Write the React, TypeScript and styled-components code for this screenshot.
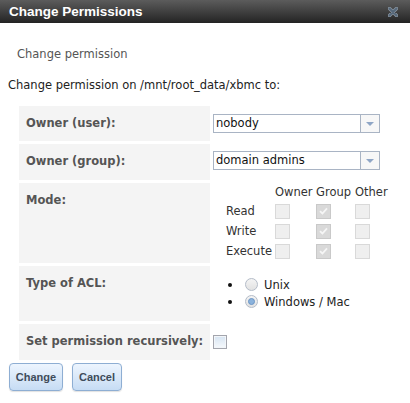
import { Fragment } from "react";
import styled, { createGlobalStyle } from "styled-components";

const GlobalStyle = createGlobalStyle`
  html, body {
    margin: 0;
    padding: 0;
    background: #fff;
  }
  body {
    font-family: "DejaVu Sans", Verdana, sans-serif;
    font-size: 11.5px;
    color: #222;
  }
`;

const Dialog = styled.div`
  width: 410px;
  height: 403px;
  background: #fff;
  overflow: hidden;
`;

const TitleBar = styled.div`
  height: 23px;
  display: flex;
  align-items: center;
  justify-content: space-between;
  padding: 0 12px 0 9px;
  background: linear-gradient(#5c5c5c, #2c2c2c 85%, #222);
`;

const Title = styled.span`
  font-family: "Liberation Sans", Arial, sans-serif;
  font-weight: bold;
  font-size: 13.5px;
  line-height: 23px;
  color: #fff;
`;

const Content = styled.div`
  padding: 0 8px;
`;

const Subtitle = styled.div`
  margin: 24px 0 0 9px;
  line-height: 14px;
  color: #555;
`;

const Intro = styled.div`
  margin-top: 17px;
  line-height: 14px;
  color: #222;
`;

const FormGrid = styled.div`
  display: grid;
  grid-template-columns: 191px 1fr;
  column-gap: 3px;
  row-gap: 3px;
  margin: 14px 0 0 11px;
`;

const LabelCell = styled.div<{ $h: number }>`
  height: ${({ $h }) => $h}px;
  box-sizing: border-box;
  padding: 10px 7px 0;
  background: #f4f4f4;
  font-weight: bold;
  color: #555;
  line-height: 14px;
  white-space: nowrap;
`;

const FieldCell = styled.div<{ $top: number }>`
  padding-top: ${({ $top }) => $top}px;
`;

const Select = styled.div`
  width: 167px;
  height: 19px;
  box-sizing: border-box;
  border: 1px solid #a9b4c4;
  background: #fff;
  display: flex;
`;

const SelectValue = styled.span`
  flex: 1;
  padding-left: 2px;
  line-height: 17px;
  color: #111;
`;

const SelectArrow = styled.span`
  width: 18px;
  border-left: 1px solid #a9b4c4;
  background: #f7f7f7;
  display: flex;
  align-items: center;
  justify-content: center;
  &::after {
    content: "";
    border-left: 4px solid transparent;
    border-right: 4px solid transparent;
    border-top: 4px solid #8fa6c6;
  }
`;

const ModeGrid = styled.div`
  display: grid;
  grid-template-columns: 49px 41px 39px auto;
  grid-template-rows: 18px repeat(3, 20px);
  align-items: center;
  padding-left: 13px;
  line-height: 14px;
  color: #333;
`;

const Box = styled.span<{ $checked?: boolean }>`
  width: 15px;
  height: 15px;
  box-sizing: border-box;
  display: flex;
  align-items: center;
  justify-content: center;
  border: 1px solid ${({ $checked }) => ($checked ? "#c9c9c9" : "#d9d9d9")};
  background: ${({ $checked }) => ($checked ? "#d9d9d9" : "#efefef")};
`;

const RadioList = styled.ul`
  list-style: none;
  margin: 0;
  padding: 0;
`;

const RadioItem = styled.li`
  display: flex;
  align-items: center;
  height: 17px;
  color: #222;
  &::before {
    content: "";
    width: 4px;
    height: 4px;
    border-radius: 50%;
    background: #111;
    margin: 0 13px 0 15px;
  }
`;

const Radio = styled.span<{ $checked?: boolean }>`
  width: 13px;
  height: 13px;
  box-sizing: border-box;
  border-radius: 50%;
  border: 1px solid #b4bcc8;
  background: linear-gradient(#f4f4f4, #e2e2e2);
  margin-right: 6px;
  display: flex;
  align-items: center;
  justify-content: center;
  &::after {
    content: "";
    display: ${({ $checked }) => ($checked ? "block" : "none")};
    width: 7px;
    height: 7px;
    box-sizing: border-box;
    border-radius: 50%;
    border: 1px solid #6c95c4;
    background: #8ab2dc;
  }
`;

const RecursiveBox = styled.span`
  display: block;
  width: 14px;
  height: 14px;
  box-sizing: border-box;
  border: 1px solid #a3a5ad;
  box-shadow: inset 0 0 0 1px #f2f5f9;
  background: linear-gradient(#d6e4f2, #f6f9fc);
`;

const ButtonRow = styled.div`
  display: flex;
  gap: 9px;
  margin: 3px 0 0 1px;
`;

const Button = styled.button<{ $w: number }>`
  width: ${({ $w }) => $w}px;
  height: 28px;
  padding: 0;
  border: 1px solid #8eaed3;
  border-radius: 4px;
  background: linear-gradient(#edf5fe, #c6dcf4);
  box-shadow: 0 1px 1px rgba(0, 0, 0, 0.12);
  font-family: "Liberation Sans", Arial, sans-serif;
  font-weight: bold;
  font-size: 11px;
  color: #3f4c5a;
`;

const CloseIcon = () => (
  <svg width="10" height="10" viewBox="0 0 10 10">
    <path d="M1.5 1.5 L8.5 8.5 M8.5 1.5 L1.5 8.5" stroke="#8b97a3" strokeWidth="3.4" strokeLinecap="round" />
    <path d="M1.5 1.5 L8.5 8.5 M8.5 1.5 L1.5 8.5" stroke="#56687a" strokeWidth="2" strokeLinecap="round" />
  </svg>
);

const Check = () => (
  <svg width="9" height="8" viewBox="0 0 9 8">
    <path d="M1 4.2 L3.4 6.5 L8 1.3" fill="none" stroke="#f6f6f6" strokeWidth="1.8" />
  </svg>
);

const modeRows = ["Read", "Write", "Execute"];

export default function App() {
  return (
    <Dialog>
      <GlobalStyle />
      <TitleBar>
        <Title>Change Permissions</Title>
        <CloseIcon />
      </TitleBar>
      <Content>
        <Subtitle>Change permission</Subtitle>
        <Intro>Change permission on /mnt/root_data/xbmc to:</Intro>
        <FormGrid>
          <LabelCell $h={35}>Owner (user):</LabelCell>
          <FieldCell $top={8}>
            <Select>
              <SelectValue>nobody</SelectValue>
              <SelectArrow />
            </Select>
          </FieldCell>

          <LabelCell $h={36}>Owner (group):</LabelCell>
          <FieldCell $top={7}>
            <Select>
              <SelectValue>domain admins</SelectValue>
              <SelectArrow />
            </Select>
          </FieldCell>

          <LabelCell $h={80}>Mode:</LabelCell>
          <FieldCell $top={0}>
            <ModeGrid>
              <span />
              <span>Owner</span>
              <span>Group</span>
              <span>Other</span>
              {modeRows.map((r) => (
                <Fragment key={r}>
                  <span>{r}</span>
                  <Box />
                  <Box $checked>
                    <Check />
                  </Box>
                  <Box />
                </Fragment>
              ))}
            </ModeGrid>
          </FieldCell>

          <LabelCell $h={55}>Type of ACL:</LabelCell>
          <FieldCell $top={10}>
            <RadioList>
              <RadioItem>
                <Radio />
                Unix
              </RadioItem>
              <RadioItem>
                <Radio $checked />
                Windows / Mac
              </RadioItem>
            </RadioList>
          </FieldCell>

          <LabelCell $h={36}>Set permission recursively:</LabelCell>
          <FieldCell $top={11}>
            <RecursiveBox />
          </FieldCell>
        </FormGrid>
        <ButtonRow>
          <Button $w={54}>Change</Button>
          <Button $w={50}>Cancel</Button>
        </ButtonRow>
      </Content>
    </Dialog>
  );
}
